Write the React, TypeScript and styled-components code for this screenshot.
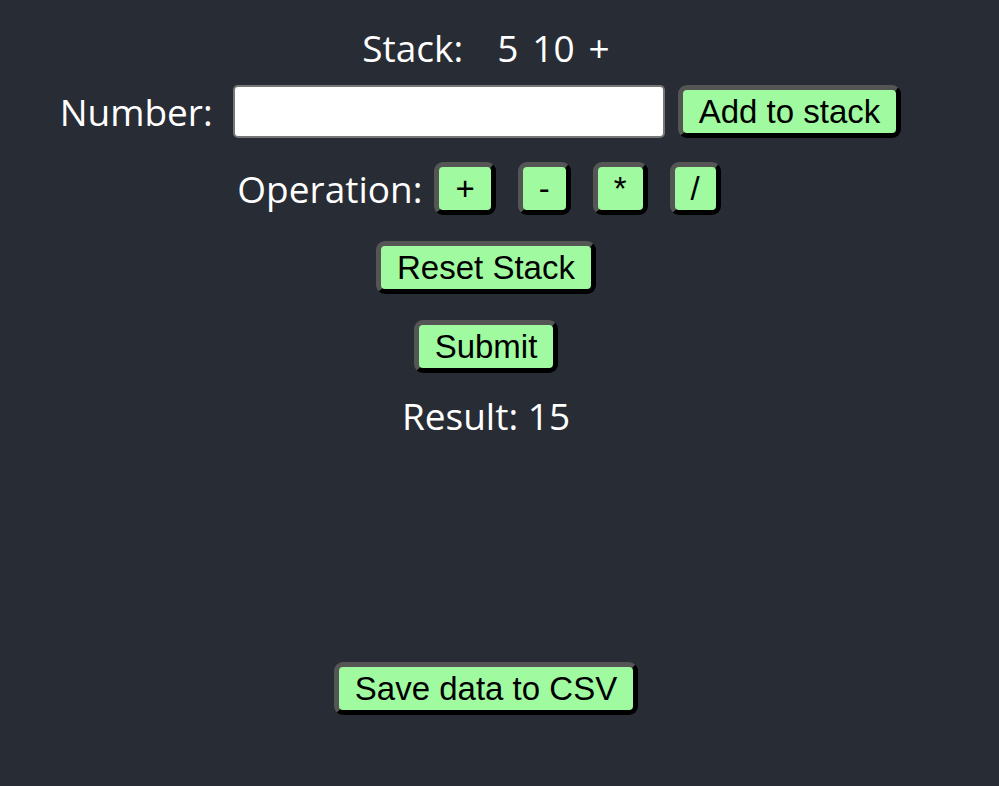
import React, { useState } from "react";
import styled, { createGlobalStyle } from "styled-components";

const GlobalStyle = createGlobalStyle`
  html, body {
    margin: 0;
    padding: 0;
    background: #282c34;
  }
`;

const Page = styled.div`
  min-height: 786px;
  box-sizing: border-box;
  padding: 22px 27px 0 0;
  display: flex;
  flex-direction: column;
  align-items: center;
  color: #ffffff;
  font-family: "Open Sans", "Noto Sans", sans-serif;
  font-size: 37px;
`;

const StackLine = styled.div`
  display: flex;
  align-items: baseline;
  gap: 14px;
  height: 50px;
`;

const StackLabel = styled.span`
  margin-right: 20px;
`;

const Row = styled.div<{ $gap: number; $top: number; $shift: number }>`
  display: flex;
  align-items: center;
  gap: ${(p) => p.$gap}px;
  margin-top: ${(p) => p.$top}px;
  margin-right: ${(p) => p.$shift}px;
`;

const Label = styled.span<{ $space?: number }>`
  margin-right: ${(p) => p.$space ?? 0}px;
`;

const NumberInput = styled.input`
  box-sizing: border-box;
  width: 432px;
  height: 53px;
  margin-right: 13px;
  border: 2px solid #767676;
  border-radius: 5px;
  background: #ffffff;
  font-size: 30px;
  padding: 0 8px;
`;

const GreenButton = styled.button<{ $top?: number }>`
  box-sizing: border-box;
  height: 53px;
  margin-top: ${(p) => p.$top ?? 0}px;
  padding: 0 16px;
  background: #a0fba0;
  color: #000000;
  font-family: "Liberation Sans", Arial, sans-serif;
  font-size: 33px;
  border-width: 5px;
  border-style: solid;
  border-color: #555555 #000000 #000000 #555555;
  border-radius: 9px;
  cursor: pointer;
`;

const OpButtons = styled.div`
  display: flex;
  gap: 22px;
`;

const Result = styled.div`
  margin-top: 17px;
  height: 50px;
`;

const Spacer = styled.div`
  height: 222px;
`;

export default function App() {
  const [stack] = useState<string[]>(["5", "10", "+"]);
  const [value, setValue] = useState("");

  return (
    <>
      <GlobalStyle />
      <Page>
        <StackLine>
          <StackLabel>Stack:</StackLabel>
          {stack.map((item, i) => (
            <span key={i}>{item}</span>
          ))}
        </StackLine>
        <Row $gap={0} $top={13} $shift={11}>
          <Label $space={20}>Number:</Label>
          <NumberInput
            type="text"
            value={value}
            onChange={(e) => setValue(e.target.value)}
          />
          <GreenButton>Add to stack</GreenButton>
        </Row>
        <Row $gap={12} $top={24} $shift={14}>
          <Label>Operation:</Label>
          <OpButtons>
            {["+", "-", "*", "/"].map((op) => (
              <GreenButton key={op}>{op}</GreenButton>
            ))}
          </OpButtons>
        </Row>
        <GreenButton $top={26}>Reset Stack</GreenButton>
        <GreenButton $top={26}>Submit</GreenButton>
        <Result>Result: 15</Result>
        <Spacer />
        <GreenButton>Save data to CSV</GreenButton>
      </Page>
    </>
  );
}
